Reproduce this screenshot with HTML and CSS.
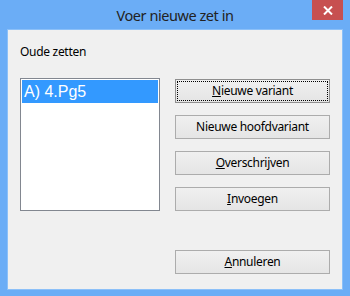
FILE: index.html
```html
<!DOCTYPE html>
<html>
<head>
<meta charset="utf-8">
<link rel="stylesheet" href="styles.css">
</head>
<body>
<div class="window">
  <div class="titlebar">
    <span class="title">Voer nieuwe zet in</span>
    <div class="close">
      <svg width="10" height="9" viewBox="0 0 10 9"><path d="M1 0.5 L9 8.5 M9 0.5 L1 8.5" stroke="#fff" stroke-width="2" fill="none"/></svg>
    </div>
  </div>
  <div class="client">
    <div class="label">Oude zetten</div>
    <div class="row">
      <div class="listbox">
        <div class="item selected">A) 4.Pg5</div>
      </div>
      <div class="buttons">
        <div class="btn default"><span class="focus"><u>N</u>ieuwe variant</span></div>
        <div class="btn"><span>Nieuwe hoofdvariant</span></div>
        <div class="btn"><span><u>O</u>verschrijven</span></div>
        <div class="btn"><span><u>I</u>nvoegen</span></div>
        <div class="btn cancel"><span><u>A</u>nnuleren</span></div>
      </div>
    </div>
  </div>
</div>
</body>
</html>
```

FILE: styles.css
```css
html, body {
  margin: 0;
  padding: 0;
}
body {
  width: 350px;
  height: 296px;
  overflow: hidden;
}
.window {
  width: 350px;
  height: 296px;
  background: #6badf6;
  display: flex;
  flex-direction: column;
  box-sizing: border-box;
}
.titlebar {
  position: relative;
  height: 30px;
  display: flex;
  justify-content: center;
  align-items: center;
}
.title {
  font-family: "Noto Sans", "Open Sans", sans-serif;
  font-size: 14.5px;
  letter-spacing: -0.45px;
  color: #222;
  margin-top: -1px;
}
.close {
  position: absolute;
  top: 0;
  right: 7px;
  width: 31px;
  height: 20px;
  background: #c75050;
  display: flex;
  align-items: center;
  justify-content: center;
}
.close svg {
  display: block;
}
.client {
  margin: 0 8px 7px 8px;
  flex: 1;
  background: #f0f0f0;
  padding: 14px 12px 0 12px;
  box-shadow: 0 0 0 1px #8cc0f8;
  font-family: "Noto Sans", "Open Sans", sans-serif;
  font-size: 12px;
  letter-spacing: -0.3px;
  color: #000;
}
.label {
  line-height: 16px;
  height: 16px;
}
.row {
  margin-top: 18px;
  display: flex;
  gap: 15px;
  align-items: flex-start;
}
.listbox {
  width: 140px;
  height: 133px;
  box-sizing: border-box;
  border: 1px solid #828790;
  background: #fff;
  padding: 1px;
}
.item {
  height: 23px;
  line-height: 23px;
  padding-left: 2px;
  font-family: "Liberation Sans", Arial, sans-serif;
  font-size: 16px;
  letter-spacing: 0;
}
.item.selected {
  background: #3399ff;
  color: #fff;
}
.buttons {
  margin-top: 1px;
  display: flex;
  flex-direction: column;
  gap: 12px;
  width: 155px;
}
.btn {
  height: 24px;
  box-sizing: border-box;
  border: 1px solid #acacac;
  background: linear-gradient(#f0f0f0, #e5e5e5);
  display: flex;
  align-items: center;
  justify-content: center;
  padding: 1px;
}
.btn span {
  line-height: 16px;
}
.btn.default {
  border-color: #8f8f8f;
}
.btn .focus {
  flex: 1;
  align-self: stretch;
  border: 1px dotted #000;
  display: flex;
  align-items: center;
  justify-content: center;
}
.btn.cancel {
  margin-top: 27px;
}
u {
  text-decoration: underline;
  text-underline-offset: 1px;
}
```
